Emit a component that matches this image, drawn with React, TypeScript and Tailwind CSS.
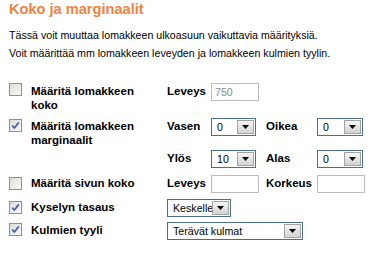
import type { ReactNode } from 'react';

const Check = ({ checked }: { checked?: boolean }) => (
  <div className="flex h-[13px] w-[13px] items-center justify-center border border-[#8f8f8f] bg-linear-to-br from-[#dcdcd8] to-[#fafaf8]">
    {checked && (
      <svg width="9" height="9" viewBox="0 0 9 9">
        <path d="M1.2 4.6 L3.4 7 L7.8 1.4" fill="none" stroke="#4a5ea8" strokeWidth="1.7" />
      </svg>
    )}
  </div>
);

const Select = ({ value, width }: { value: string; width: string }) => (
  <div className={`flex h-[18px] items-stretch border border-[#4d6d8c] bg-white ${width}`}>
    <span className="flex-1 overflow-hidden whitespace-nowrap pl-[5px] text-[10.65px] leading-[16px] text-black">
      {value}
    </span>
    <div className="my-[1px] mr-[1px] flex w-[17px] shrink-0 items-center justify-center border border-[#a3a3a3] bg-linear-to-b from-[#f6f6f6] to-[#d3d3d3]">
      <svg width="7" height="4" viewBox="0 0 7 4">
        <path d="M0 0 H7 L3.5 4 Z" fill="#000" />
      </svg>
    </div>
  </div>
);

const TextBox = ({ value }: { value?: string }) => (
  <div className="h-[18px] w-[48px] border border-[#bdbdbd] bg-white pl-[3px] text-[10.65px] leading-[16px] text-[#8a8a8a]">
    {value}
  </div>
);

const Label = ({ children, width }: { children: ReactNode; width: string }) => (
  <div className={`pt-[1px] text-[11.5px] font-bold leading-[14px] text-black ${width}`}>{children}</div>
);

export default function App() {
  return (
    <div className="h-[257px] w-[376px] bg-white pl-[9px] font-['Liberation_Sans',Arial,sans-serif]">
      <h1 className="text-[14.6px] font-bold leading-[18px] text-[#f4823e]">Koko ja marginaalit</h1>
      <div className="mt-[8px] text-[10.65px] leading-[18px] text-black">
        <p>Tässä voit muuttaa lomakkeen ulkoasuun vaikuttavia määrityksiä.</p>
        <p>Voit määrittää mm lomakkeen leveyden ja lomakkeen kulmien tyylin.</p>
      </div>

      {/* lomakkeen koko */}
      <div className="mt-[21px] flex items-start">
        <div className="w-[22px]">
          <Check />
        </div>
        <Label width="w-[136px]">
          Määritä lomakkeen
          <br />
          koko
        </Label>
        <Label width="w-[44px]">Leveys</Label>
        <TextBox value="750" />
      </div>

      {/* marginaalit */}
      <div className="mt-[6px] flex items-start">
        <div className="w-[22px] pt-[1px]">
          <Check checked />
        </div>
        <Label width="w-[136px]">
          Määritä lomakkeen
          <br />
          marginaalit
        </Label>
        <div className="flex flex-col gap-[14px]">
          <div className="flex items-start">
            <Label width="w-[44px]">Vasen</Label>
            <div className="w-[55px]">
              <Select value="0" width="w-[45px]" />
            </div>
            <Label width="w-[51px]">Oikea</Label>
            <Select value="0" width="w-[46px]" />
          </div>
          <div className="flex items-start">
            <Label width="w-[44px]">Ylös</Label>
            <div className="w-[55px]">
              <Select value="10" width="w-[45px]" />
            </div>
            <Label width="w-[51px]">Alas</Label>
            <Select value="0" width="w-[46px]" />
          </div>
        </div>
      </div>

      {/* sivun koko */}
      <div className="mt-[7px] flex items-start">
        <div className="w-[22px] pt-[2px]">
          <Check />
        </div>
        <Label width="w-[136px]">Määritä sivun koko</Label>
        <Label width="w-[44px]">Leveys</Label>
        <div className="w-[55px]">
          <TextBox />
        </div>
        <Label width="w-[51px]">Korkeus</Label>
        <TextBox />
      </div>

      {/* tasaus */}
      <div className="mt-[6px] flex items-start">
        <div className="w-[22px] pt-[2px]">
          <Check checked />
        </div>
        <Label width="w-[136px]">Kyselyn tasaus</Label>
        <Select value="Keskelle" width="w-[64px]" />
      </div>

      {/* kulmat */}
      <div className="mt-[5px] flex items-start">
        <div className="w-[22px] pt-[1px]">
          <Check checked />
        </div>
        <Label width="w-[136px]">Kulmien tyyli</Label>
        <Select value="Terävät kulmat" width="w-[136px]" />
      </div>
    </div>
  );
}
